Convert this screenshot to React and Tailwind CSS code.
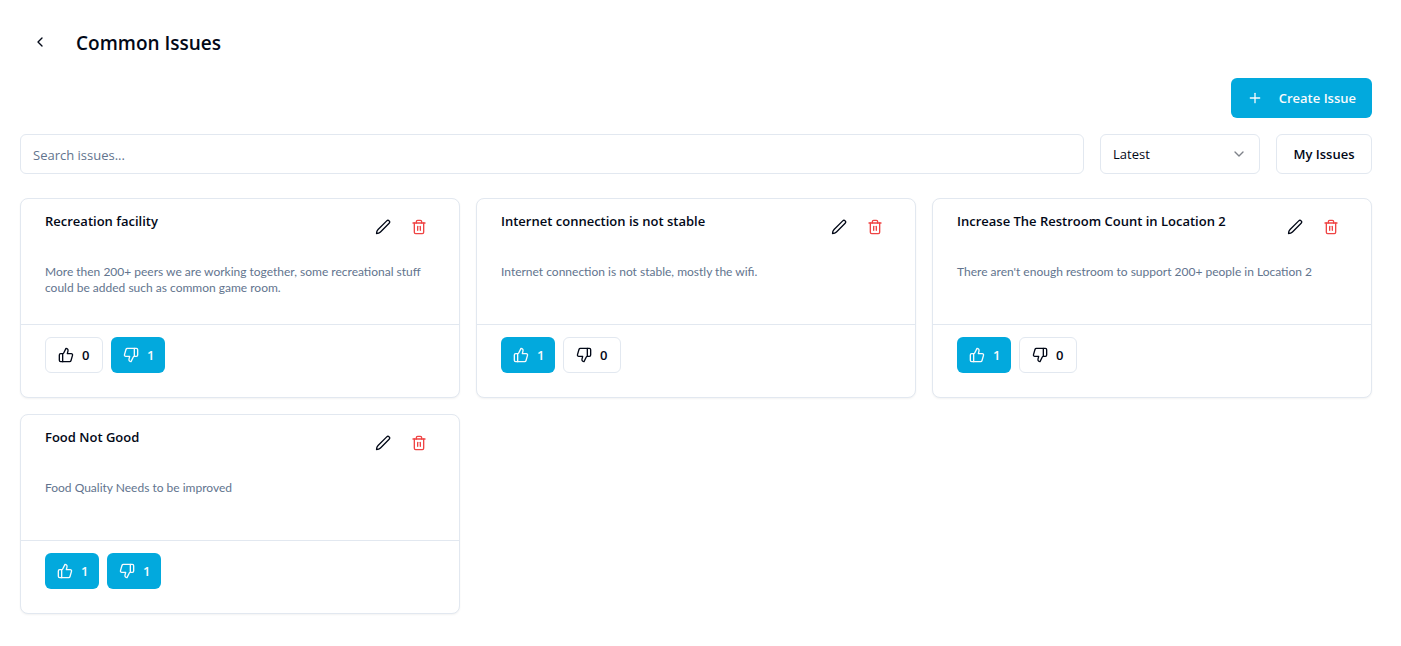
import { ChevronDown, ChevronLeft, Plus, ThumbsDown, ThumbsUp, Trash2 } from "lucide-react";

const issues = [
  {
    title: "Recreation facility",
    description:
      "More then 200+ peers we are working together, some recreational stuff could be added such as common game room.",
    up: 0,
    down: 1,
  },
  {
    title: "Internet connection is not stable",
    description: "Internet connection is not stable, mostly the wifi.",
    up: 1,
    down: 0,
  },
  {
    title: "Increase The Restroom Count in Location 2",
    description: "There aren't enough restroom to support 200+ people in Location 2",
    up: 1,
    down: 0,
  },
  { title: "Food Not Good", description: "Food Quality Needs to be improved", up: 1, down: 1 },
];

function PenIcon({ className }) {
  return (
    <svg
      viewBox="0 0 24 24"
      fill="none"
      stroke="currentColor"
      strokeWidth="2"
      strokeLinecap="round"
      strokeLinejoin="round"
      aria-hidden="true"
      className={className}
    >
      <path d="M17.6 2.8a2.5 2.5 0 0 1 3.6 3.6L8.200 19.400C6.800 20.800 5 21.700 2.300 21.700C2.300 19 3.200 17.200 4.600 15.800Z" />
    </svg>
  );
}

function VoteButton({ icon: Icon, label, count }) {
  const look =
    count > 0
      ? "w-[54px] bg-[#02a9dd] text-slate-50"
      : "w-[58px] border border-slate-200 bg-white text-[#020817]";
  return (
    <button
      type="button"
      aria-label={`${label}: ${count}`}
      className={`flex h-9 items-center gap-2 rounded-md pl-3 text-[13px] font-semibold ${look}`}
    >
      <Icon className="size-4 shrink-0" />
      <span className="pt-px">{count}</span>
    </button>
  );
}

function IssueCard({ issue }) {
  return (
    <article className="rounded-lg border border-slate-200 bg-white shadow-xs">
      <div className="px-6 pt-3">
        <div className="flex items-start justify-between">
          <h2 className="text-[13px] leading-5 font-semibold">{issue.title}</h2>
          <div className="flex gap-1">
            <button type="button" aria-label="Edit issue" className="flex size-8 items-center justify-center">
              <PenIcon className="size-4" />
            </button>
            <button
              type="button"
              aria-label="Delete issue"
              className="flex size-8 items-center justify-center text-[#ef4444]"
            >
              <Trash2 className="size-4" />
            </button>
          </div>
        </div>
        <p className="mt-[21px] min-h-[60px] font-['Lato',sans-serif] text-xs leading-4 text-slate-500">
          {issue.description}
        </p>
      </div>
      <div className="flex gap-2 border-t border-slate-200 px-6 pt-3 pb-6">
        <VoteButton icon={ThumbsUp} label="Upvotes" count={issue.up} />
        <VoteButton icon={ThumbsDown} label="Downvotes" count={issue.down} />
      </div>
    </article>
  );
}

export default function App() {
  return (
    <main className="min-h-screen bg-white pt-6 pr-[29px] pb-8 pl-5 font-['Open_Sans','Noto_Sans',sans-serif] text-[#020817]">
      <header className="flex items-center gap-4">
        <button type="button" aria-label="Back" className="flex h-9 w-10 items-center justify-center">
          <ChevronLeft className="size-4" />
        </button>
        <h1 className="pt-0.5 text-[19px] leading-7 font-semibold">Common Issues</h1>
      </header>

      <div className="mt-[18px] flex justify-end">
        <button
          type="button"
          className="flex h-10 items-center gap-4 rounded-md bg-[#02a9dd] px-4 text-[13px] font-semibold text-slate-50"
        >
          <Plus className="size-4" />
          <span className="pt-px">Create Issue</span>
        </button>
      </div>

      <div className="mt-4 flex gap-4">
        <input
          type="text"
          aria-label="Search issues"
          placeholder="Search issues..."
          className="h-10 min-w-0 flex-1 rounded-md border border-slate-200 px-3 pt-0.5 text-[13px] placeholder:text-slate-500"
        />
        <div className="grid w-40 items-center">
          <select
            aria-label="Sort order"
            defaultValue="Latest"
            className="col-start-1 row-start-1 h-10 appearance-none rounded-md border border-slate-200 bg-white px-3 pt-0.5 text-[13px]"
          >
            <option>Latest</option>
            <option>Oldest</option>
          </select>
          <ChevronDown className="pointer-events-none col-start-1 row-start-1 mr-[13px] size-4 justify-self-end opacity-50" />
        </div>
        <button
          type="button"
          className="h-10 w-24 rounded-md border border-slate-200 bg-white pt-0.5 text-[13px] font-semibold"
        >
          My Issues
        </button>
      </div>

      <section className="mt-6 grid grid-cols-3 gap-4">
        {issues.map((issue) => (
          <IssueCard key={issue.title} issue={issue} />
        ))}
      </section>
    </main>
  );
}
